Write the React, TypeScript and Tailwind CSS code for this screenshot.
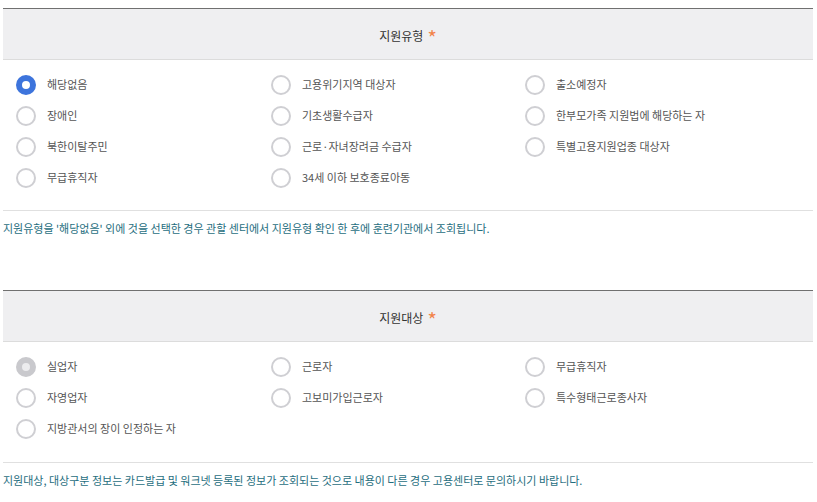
import React from "react";

type Option = { label: string; checked?: boolean; disabled?: boolean };

const typeOptions: Option[] = [
  { label: "해당없음", checked: true },
  { label: "고용위기지역 대상자" },
  { label: "출소예정자" },
  { label: "장애인" },
  { label: "기초생활수급자" },
  { label: "한부모가족 지원법에 해당하는 자" },
  { label: "북한이탈주민" },
  { label: "근로·자녀장려금 수급자" },
  { label: "특별고용지원업종 대상자" },
  { label: "무급휴직자" },
  { label: "34세 이하 보호종료아동" },
];

const targetOptions: Option[] = [
  { label: "실업자", checked: true, disabled: true },
  { label: "근로자" },
  { label: "무급휴직자" },
  { label: "자영업자" },
  { label: "고보미가입근로자" },
  { label: "특수형태근로종사자" },
  { label: "지방관서의 장이 인정하는 자" },
];

function Radio({ checked, disabled }: { checked?: boolean; disabled?: boolean }) {
  if (checked && disabled) {
    return <span className="block h-5 w-5 shrink-0 rounded-full border-[6px] border-[#c9c9cd] bg-[#ececee]" />;
  }
  if (checked) {
    return <span className="block h-5 w-5 shrink-0 rounded-full border-[6px] border-[#3d74dc] bg-white" />;
  }
  return <span className="block h-5 w-5 shrink-0 rounded-full border-[2.5px] border-[#cfcfd3] bg-white" />;
}

function Section({
  title,
  options,
  note,
  bottomPad,
}: {
  title: string;
  options: Option[];
  note: string;
  bottomPad: string;
}) {
  return (
    <section className="mx-[3px] w-[810px]">
      <div className="flex h-[52px] items-center justify-center border-t border-b border-t-[#707070] border-b-[#dcdcdc] bg-[#efeff1] pt-[3px]">
        <span className="text-[12px] text-[#333]">{title}</span>
        <span className="ml-[4px] mt-[4px] text-[20px] leading-none text-[#f2834a]">*</span>
      </div>
      <div className={`grid grid-cols-[255px_254px_1fr] px-[13px] pt-[9px] ${bottomPad}`}>
        {options.map((o) => (
          <label key={o.label} className="flex h-[31px] items-center gap-[11px]">
            <Radio checked={o.checked} disabled={o.disabled} />
            <span className="text-[11px] text-[#555]">{o.label}</span>
          </label>
        ))}
      </div>
      <div className="border-t border-[#e0e0e0] pt-[8px] pb-[10px]">
        <p className="text-[11px] leading-[18px] text-[#1f6e7e]">{note}</p>
      </div>
    </section>
  );
}

export default function App() {
  return (
    <div
      className="min-h-[502px] w-[817px] bg-white pt-[8px]"
      style={{ fontFamily: '"Noto Sans CJK KR", "Noto Sans", sans-serif' }}
    >
      <Section
        title="지원유형"
        options={typeOptions}
        note="지원유형을 '해당없음' 외에 것을 선택한 경우 관할 센터에서 지원유형 확인 한 후에 훈련기관에서 조회됩니다."
        bottomPad="pb-[17px]"
      />
      <div className="h-[43px]" />
      <Section
        title="지원대상"
        options={targetOptions}
        note="지원대상, 대상구분 정보는 카드발급 및 워크넷 등록된 정보가 조회되는 것으로 내용이 다른 경우 고용센터로 문의하시기 바랍니다."
        bottomPad="pb-[18px]"
      />
    </div>
  );
}
